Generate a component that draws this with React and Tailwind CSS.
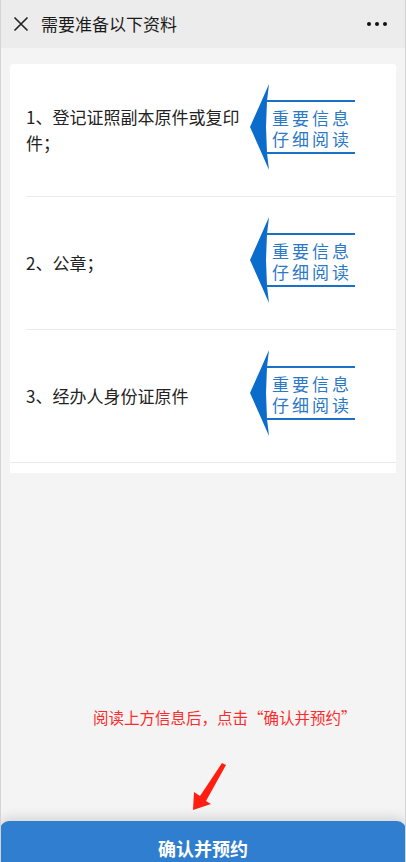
import React from 'react';

const cjk = { fontFamily: '"Noto Sans CJK SC", "Noto Sans", sans-serif' };

const items = [
  { text: '1、登记证照副本原件或复印件；' },
  { text: '2、公章；' },
  { text: '3、经办人身份证原件' },
];

const NoticeBadge = () => (
  <div className="relative w-[106px] h-[88px] shrink-0">
    <svg className="absolute inset-0" width="106" height="88" viewBox="0 0 106 88">
      <path d="M19 1 Q 9 24 0 44 Q 9 64 19 87 L 17 70 L 16 44 L 17 18 Z" fill="#0b6ccc" />
      <rect x="16" y="17" width="89" height="2" fill="#1a72c8" />
      <rect x="16" y="69" width="89" height="2" fill="#1a72c8" />
    </svg>
    <div className="absolute left-[22px] top-[26px] text-[17px] leading-none tracking-[3px] text-[#2a78c6]" style={cjk}>
      重要信息
    </div>
    <div className="absolute left-[22px] top-[47px] text-[17px] leading-none tracking-[3px] text-[#2a78c6]" style={cjk}>
      仔细阅读
    </div>
  </div>
);

export default function App() {
  return (
    <div className="h-[862px] w-[406px] overflow-hidden flex flex-col bg-[#f4f4f4] border-x border-[#d4d4d4]" style={cjk}>
      {/* top bar */}
      <div className="h-12 shrink-0 bg-[#ececec] flex items-center pl-3 pr-[18px]">
        <svg width="16" height="16" viewBox="0 0 16 16" className="shrink-0">
          <path d="M1.5 1.5 L14.5 14.5 M14.5 1.5 L1.5 14.5" stroke="#222" strokeWidth="1.6" fill="none" />
        </svg>
        <div className="ml-[12px] text-[17px] text-[#1b1b1b]">需要准备以下资料</div>
        <div className="ml-auto flex gap-[4px] items-center">
          <span className="w-[4px] h-[4px] rounded-full bg-[#111]" />
          <span className="w-[4px] h-[4px] rounded-full bg-[#111]" />
          <span className="w-[4px] h-[4px] rounded-full bg-[#111]" />
        </div>
      </div>

      {/* list card */}
      <div className="mt-4 mx-[9px] bg-white rounded-t-[3px] pb-[10px]">
        {items.map((item, i) => {
          const last = i === items.length - 1;
          return (
            <div key={i} className={last ? 'pl-4 border-b border-[#ebebeb]' : 'ml-4 border-b border-[#ebebeb]'}>
              <div className="h-[132px] flex items-center">
                <div className="w-[224px] pr-1 text-[17px] leading-[26px] text-[#222]">{item.text}</div>
                <div className="mb-[6px]">
                  <NoticeBadge />
                </div>
              </div>
            </div>
          );
        })}
      </div>

      {/* hint */}
      <div className="mt-[234px] pl-[92px] text-[15.5px] leading-5 text-[#ff2b2b]">
        阅读上方信息后，点击“确认并预约”
      </div>
      <div className="mt-[35px] pl-[188px] h-[49px]">
        <svg width="40" height="49" viewBox="0 0 40 49">
          <polygon points="4,48 5,30 11,34 33,1 37,3 17,39 22,42" fill="#ff1f12" />
        </svg>
      </div>

      {/* confirm button */}
      <div className="mt-[10px] shrink-0 h-[54px] mx-[-1px] rounded-t-[9px] bg-[#2f7ecf] flex items-center justify-center text-white text-[18px] font-bold shadow-[0_-4px_12px_rgba(0,0,0,0.12)]">
        确认并预约
      </div>
    </div>
  );
}
